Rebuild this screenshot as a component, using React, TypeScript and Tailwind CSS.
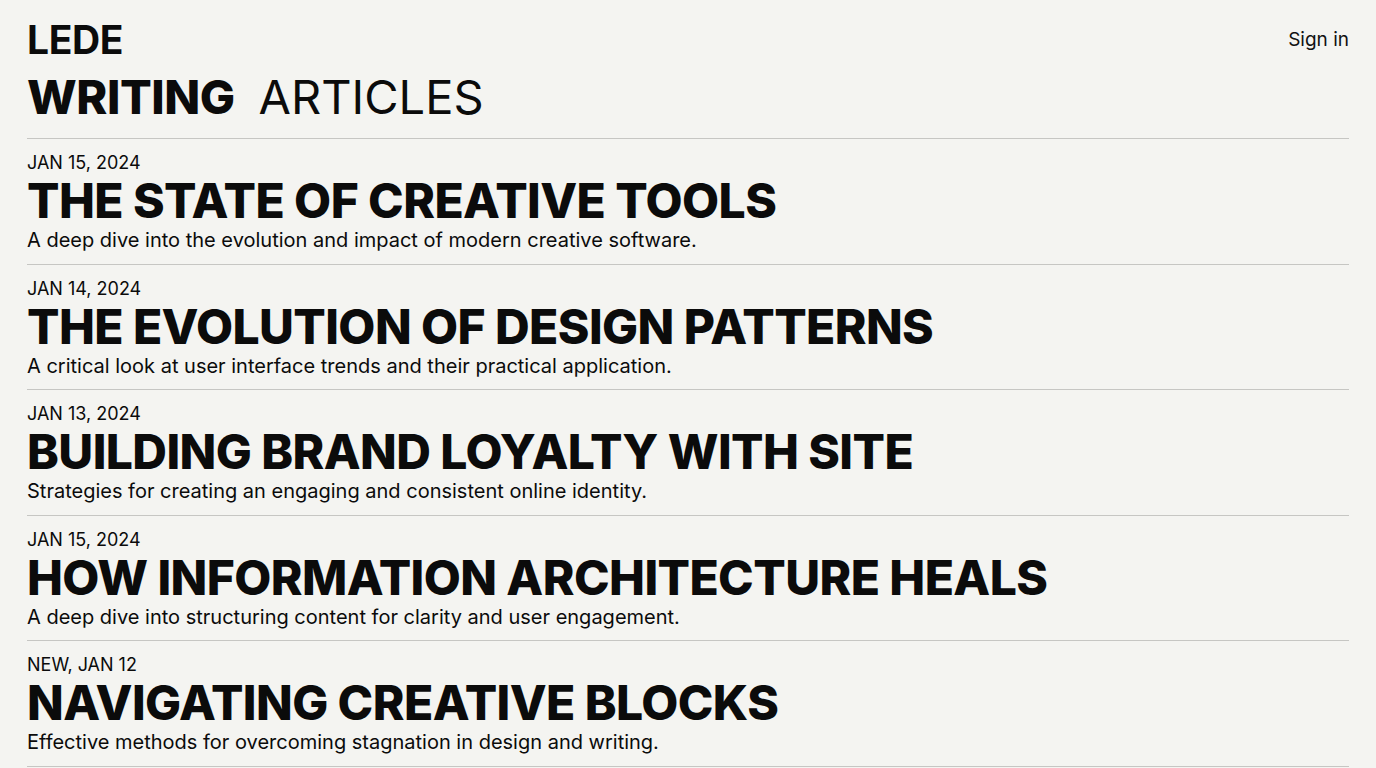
import React from "react";

const articles = [
  { date: "JAN 15, 2024", title: "THE STATE OF CREATIVE TOOLS", desc: "A deep dive into the evolution and impact of modern creative software." },
  { date: "JAN 14, 2024", title: "THE EVOLUTION OF DESIGN PATTERNS", desc: "A critical look at user interface trends and their practical application." },
  { date: "JAN 13, 2024", title: "BUILDING BRAND LOYALTY WITH SITE", desc: "Strategies for creating an engaging and consistent online identity." },
  { date: "JAN 15, 2024", title: "HOW INFORMATION ARCHITECTURE HEALS", desc: "A deep dive into structuring content for clarity and user engagement." },
  { date: "NEW, JAN 12", title: "NAVIGATING CREATIVE BLOCKS", desc: "Effective methods for overcoming stagnation in design and writing." },
];

export default function App() {
  return (
    <div className="min-h-screen w-full bg-[#f4f4f1] text-[#0b0b0b] font-['Inter',sans-serif] px-[27px] overflow-hidden h-[768px]">
      <header className="flex items-start justify-between pt-[18px]">
        <div className="text-[39px] leading-[44px] font-bold tracking-[-0.01em]">LEDE</div>
        <a className="text-[19px] leading-[24px] mt-[10px] text-[#111]">Sign in</a>
      </header>
      <h1 className="mt-[8px] text-[47px] leading-[54px] tracking-[-0.01em] flex gap-[24px]">
        <span className="font-extrabold">WRITING</span>
        <span className="font-normal tracking-[0]">ARTICLES</span>
      </h1>
      <div className="mt-[14px] border-t border-[#c6c6c3]" />
      <ul>
        {articles.map((a, i) => (
          <li key={i} className="border-b border-[#c6c6c3] pt-[13px] h-[125.5px]">
            <div className="text-[18px] leading-[22px]">{a.date}</div>
            <div className="text-[48px] leading-[53px] font-extrabold tracking-[-0.012em]">{a.title}</div>
            <div className="text-[20px] leading-[26px]">{a.desc}</div>
          </li>
        ))}
      </ul>
    </div>
  );
}
